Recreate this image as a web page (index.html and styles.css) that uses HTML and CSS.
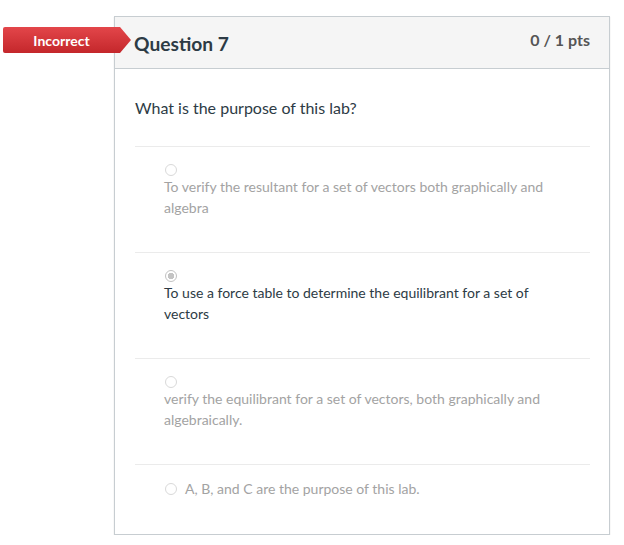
FILE: index.html
```html
<!DOCTYPE html>
<html lang="en">
<head>
<meta charset="utf-8">
<title>Question 7</title>
<link rel="stylesheet" href="styles.css">
</head>
<body>
<div class="page">
  <div class="card">
    <div class="badge">Incorrect</div>
    <div class="header">
      <span class="title">Question 7</span>
      <span class="pts">0 / 1 pts</span>
    </div>
    <div class="body">
      <p class="question">What is the purpose of this lab?</p>
      <div class="answers">
        <div class="answer">
          <span class="radio"></span>
          <div class="text">To verify the resultant for a set of vectors both graphically and algebra</div>
        </div>
        <div class="answer selected">
          <span class="radio checked"></span>
          <div class="text">To use a force table to determine the equilibrant for a set of vectors</div>
        </div>
        <div class="answer">
          <span class="radio"></span>
          <div class="text">verify the equilibrant for a set of vectors, both graphically and algebraically.</div>
        </div>
        <div class="answer inline">
          <span class="radio"></span>
          <div class="text">A, B, and C are the purpose of this lab.</div>
        </div>
      </div>
    </div>
  </div>
</div>
</body>
</html>
```

FILE: styles.css
```css
* { box-sizing: border-box; }
html, body { margin: 0; padding: 0; background: #fff; }
body { font-family: Lato, "Open Sans", "Liberation Sans", sans-serif; color: #2d3b45; }

.page { padding: 16px 0 0 114px; }

.card {
  position: relative;
  width: 496px;
  border: 1px solid #c7cdd1;
  box-shadow: 0 1px 1px rgba(0, 0, 0, 0.18);
  background: #fff;
}

.badge {
  position: absolute;
  left: -112px;
  top: 10px;
  width: 128px;
  height: 26px;
  padding-right: 11px;
  display: flex;
  align-items: center;
  justify-content: center;
  color: #fff;
  font-weight: 700;
  font-size: 14px;
  background: linear-gradient(#e3464a, #c4272b);
  clip-path: polygon(0 0, calc(100% - 11px) 0, 100% 50%, calc(100% - 11px) 100%, 0 100%);
  border-radius: 2px 0 0 2px;
}

.header {
  height: 52px;
  background: #f5f5f5;
  border-bottom: 1px solid #c7cdd1;
  display: flex;
  justify-content: space-between;
  align-items: flex-start;
  padding: 0 19px 0 19px;
}
.title {
  font-size: 19.2px;
  font-weight: 700;
  line-height: 24px;
  margin-top: 15px;
  color: #2d3b45;
}
.pts {
  font-size: 16px;
  font-weight: 700;
  line-height: 20px;
  margin-top: 13px;
  color: #555;
}

.body { padding: 27px 19px 0 20px; }
.question {
  margin: 0;
  font-size: 16px;
  line-height: 24px;
  padding-bottom: 26px;
}

.answer {
  border-top: 1px solid #ebebeb;
  padding: 17px 20px 34px 29px;
  font-size: 14px;
  line-height: 21px;
  color: #a3a3a3;
}
.answer.selected { color: #2d3b45; }

.radio {
  display: block;
  width: 12px;
  height: 12px;
  border-radius: 50%;
  border: 1px solid #d9d9d9;
  background: #fff;
  margin-left: 1px;
}
.radio.checked {
  border-color: #c2c2c2;
  background: radial-gradient(circle, #c4c4c4 0 3px, #fff 3.5px);
}

.answer.inline {
  display: flex;
  align-items: center;
  gap: 8px;
  padding-top: 13px;
  padding-bottom: 35px;
}
.answer.inline .radio { flex: none; }
```
